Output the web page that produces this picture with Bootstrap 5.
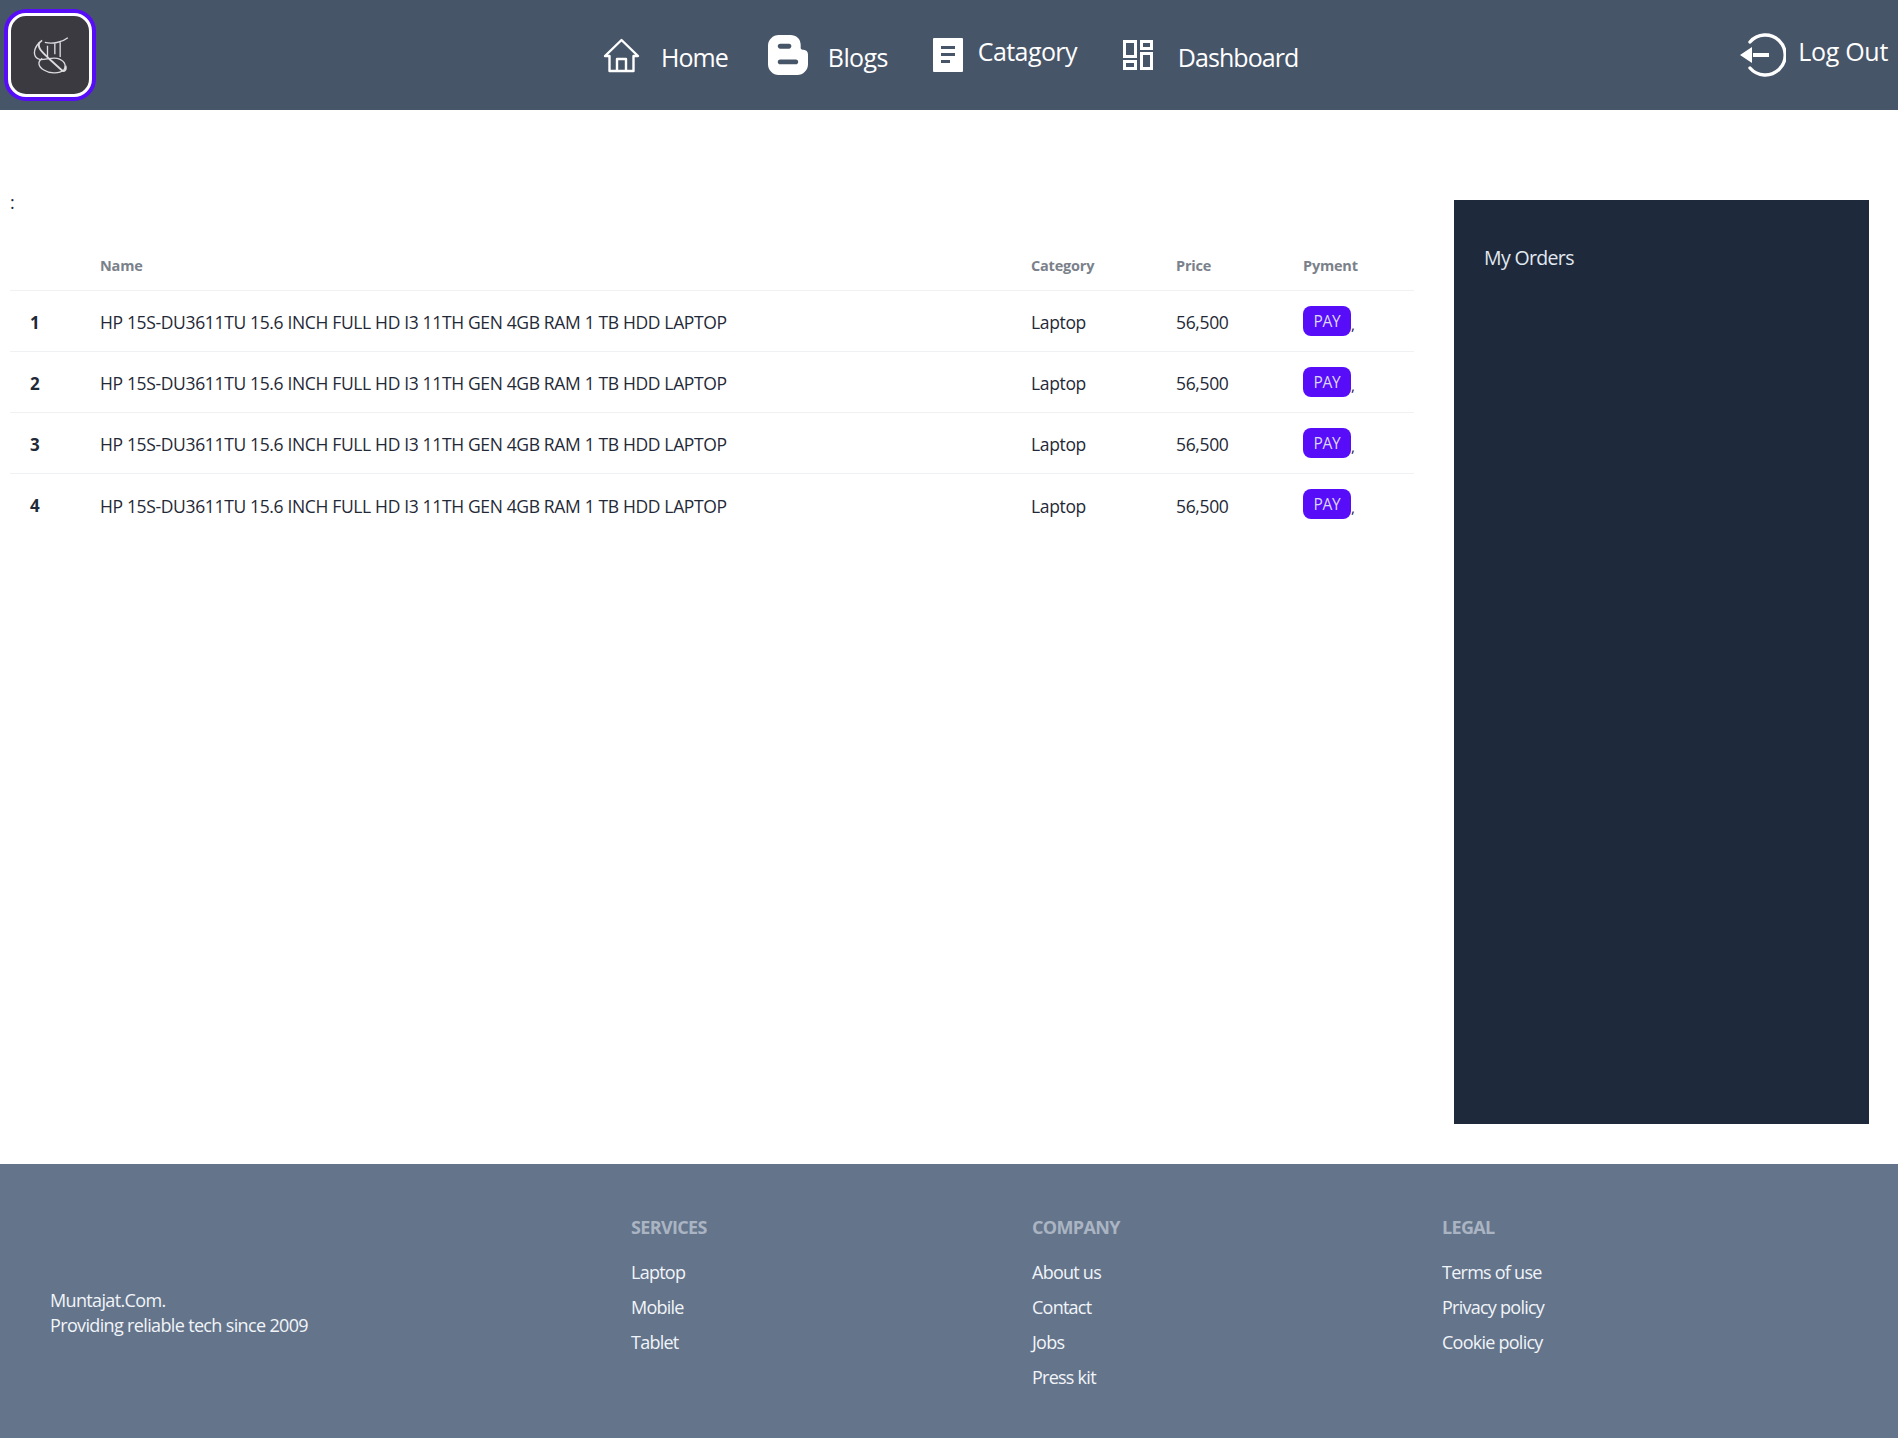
<!doctype html>
<html lang="en">
<head>
<meta charset="utf-8">
<title>Muntajat</title>
<link href="https://cdn.jsdelivr.net/npm/bootstrap@5.3.0/dist/css/bootstrap.min.css" rel="stylesheet">
<style>
body{font-family:"Open Sans","Noto Sans",sans-serif;color:#1f2937;background:#fff;font-size:16px;letter-spacing:-.45px}
.topbar{height:110px;background:#475569;position:relative;padding:0 10px 0 8px}
.logo-box{width:84px;height:84px;margin-top:13px;border-radius:18px;background:#3a3a40;border:3px solid #fff;box-shadow:0 0 0 4px #570df8}
.topnav{position:absolute;left:603px;top:0;height:110px}
.topnav a,.logout{color:#fff;text-decoration:none;font-size:25px;letter-spacing:-.6px}
.txt-low{padding-top:6px}
.txt-high{padding-bottom:6px}
.nav-home{gap:21px;letter-spacing:-.95px!important}
.nav-blogs{gap:20px;margin-left:40px}
.nav-cat{gap:15px;margin-left:45px}
.nav-dash{gap:25px;margin-left:46px;letter-spacing:-.95px!important}
.logout{gap:12px;letter-spacing:-.3px}
.page-area{padding:82px 29px 40px 10px;gap:40px}
.left-col{width:1404px;flex:none}
.colon-line{height:51px;line-height:20px;font-size:18px}
.orders{table-layout:fixed;width:1404px;margin:0;font-size:17.5px;letter-spacing:-.35px;--bs-table-border-color:#f0f1f2;border-color:#f0f1f2}
.orders th,.orders td{padding:0;vertical-align:middle;height:61px;color:#1f2937}
.orders td.txt-cell{padding-top:4px}
.orders thead th{height:47px;font-size:14.5px;font-weight:700;color:#7b818b;letter-spacing:-.2px;padding-bottom:1px}
.orders tbody tr:last-child td{border-bottom:0}
.c0{width:90px}.c1{width:931px}.c2{width:145px}.c3{width:127px}
.orders td.idx{padding-left:20px;font-weight:700;font-size:17px}
.pay-btn{background:#570df8;color:#ddd6fb;font-size:15.5px;line-height:30px;height:30px;width:48px;padding:0;border:0;border-radius:8px;letter-spacing:-.3px}
.pay-wrap{display:inline-flex;align-items:flex-end}
.sidepanel{width:415px;height:924px;margin-top:8px;background:#1e293b;color:#e2e8f0;padding:43px 30px;font-size:19.5px;flex:none;letter-spacing:-.65px}
.foot{height:274px;background:#64748b;color:#f1f5f9;display:grid;grid-template-columns:631px 401px 410px 1fr;font-size:18px;letter-spacing:-.75px}
.foot-brand{padding-left:50px;line-height:25px;padding-top:124px;letter-spacing:-.65px}
.foot-col{padding-top:51px}
.foot-head{font-weight:700;color:#aab4c2;font-size:18px;line-height:24px;margin-bottom:21px;letter-spacing:-.65px}
.foot-link{display:block;color:#f1f5f9;text-decoration:none;line-height:25px;margin-bottom:10px}
</style>
</head>
<body>
<header class="topbar d-flex">
  <div class="logo-box d-flex align-items-center justify-content-center">
    <svg width="37" height="40" viewBox="90 100 110 120" fill="none" stroke="#dcdcdf" stroke-width="4" aria-label="logo">
      <path d="M112 122C103 140 125 155 145 175L178 205C186 212 194 205 190 192" stroke-width="5.500"/>
      <path d="M120 116C100 130 92 150 100 165 112 185 140 165 165 170 185 175 195 190 185 205 170 218 140 215 125 205 108 195 105 180 120 170"/>
      <path d="M136 132V168M128 122C150 128 180 122 197 108M158 126V158M174 122V166"/>
    </svg>
  </div>
  <nav class="topnav d-flex align-items-center">
    <a href="#" class="d-flex align-items-center nav-home">
      <svg width="37" height="35" viewBox="0 0 37 35" fill="none" stroke="#fff" stroke-width="2.4" stroke-linejoin="round" aria-hidden="true">
        <path d="M2 18 18.500 2 35 18h-4.500v15H6.500V18z"/><path d="M14 33V21h9v12"/>
      </svg>
      <span class="txt-low">Home</span>
    </a>
    <a href="#" class="d-flex align-items-center nav-blogs">
      <svg width="40" height="40" viewBox="0 0 41 41" aria-hidden="true">
        <path fill="#fff" fill-rule="evenodd" d="M11 0h12c6 0 10.500 4 10.500 10v3c0 1.500 1 2 3 2.200 2.500.3 4.500 1.800 4.500 4.800v10c0 6-5 11-11 11H11C5 41 0 36 0 30V11C0 5 5 0 11 0zm1.500 9c-3.300 0-3.300 5 0 5h9c3.300 0 3.300-5 0-5zm0 16c-3.300 0-3.300 5 0 5h16c3.300 0 3.300-5 0-5z"/>
      </svg>
      <span class="txt-low">Blogs</span>
    </a>
    <a href="#" class="d-flex align-items-center nav-cat">
      <svg width="30" height="34" viewBox="0 0 30 34" aria-hidden="true">
        <path fill="#fff" fill-rule="evenodd" d="M1 0h28a1 1 0 0 1 1 1v32a1 1 0 0 1-1 1H1a1 1 0 0 1-1-1V1a1 1 0 0 1 1-1zm7 8v3h14V8zm0 7v3h14v-3zm0 7v3h9v-3z"/>
      </svg>
      <span class="txt-high">Catagory</span>
    </a>
    <a href="#" class="d-flex align-items-center nav-dash">
      <svg width="30" height="30" viewBox="0 0 30 30" fill="none" stroke="#fff" stroke-width="3" aria-hidden="true">
        <rect x="1.500" y="1.500" width="11" height="15"/><rect x="18.500" y="1.500" width="10" height="7"/><rect x="1.500" y="21.500" width="11" height="7"/><rect x="18.500" y="13.500" width="10" height="15"/>
      </svg>
      <span class="txt-low">Dashboard</span>
    </a>
  </nav>
  <a href="#" class="logout d-flex align-items-center ms-auto">
    <svg width="46" height="44" viewBox="0 0 46 44" fill="none" stroke="#fff" stroke-width="3.4" aria-hidden="true">
      <path d="M10 9a20 20 0 1 1 0 26" stroke-linecap="round"/>
      <path d="M13 22h16" stroke-width="4"/>
      <path d="M0 22 12 14v16z" fill="#fff" stroke="none"/>
    </svg>
    <span class="txt-high">Log Out</span>
  </a>
</header>

<main class="page-area d-flex">
  <section class="left-col">
    <div class="colon-line">:</div>
    <table class="table orders">
      <colgroup><col class="c0"><col class="c1"><col class="c2"><col class="c3"><col></colgroup>
      <thead>
        <tr><th></th><th>Name</th><th>Category</th><th>Price</th><th>Pyment</th></tr>
      </thead>
      <tbody>
        <tr><td class="idx txt-cell">1</td><td class="txt-cell">HP 15S-DU3611TU 15.6 INCH FULL HD I3 11TH GEN 4GB RAM 1 TB HDD LAPTOP</td><td class="txt-cell">Laptop</td><td class="txt-cell">56,500</td><td><span class="pay-wrap"><button class="btn pay-btn">PAY</button><small>,</small></span></td></tr>
        <tr><td class="idx txt-cell">2</td><td class="txt-cell">HP 15S-DU3611TU 15.6 INCH FULL HD I3 11TH GEN 4GB RAM 1 TB HDD LAPTOP</td><td class="txt-cell">Laptop</td><td class="txt-cell">56,500</td><td><span class="pay-wrap"><button class="btn pay-btn">PAY</button><small>,</small></span></td></tr>
        <tr><td class="idx txt-cell">3</td><td class="txt-cell">HP 15S-DU3611TU 15.6 INCH FULL HD I3 11TH GEN 4GB RAM 1 TB HDD LAPTOP</td><td class="txt-cell">Laptop</td><td class="txt-cell">56,500</td><td><span class="pay-wrap"><button class="btn pay-btn">PAY</button><small>,</small></span></td></tr>
        <tr><td class="idx txt-cell">4</td><td class="txt-cell">HP 15S-DU3611TU 15.6 INCH FULL HD I3 11TH GEN 4GB RAM 1 TB HDD LAPTOP</td><td class="txt-cell">Laptop</td><td class="txt-cell">56,500</td><td><span class="pay-wrap"><button class="btn pay-btn">PAY</button><small>,</small></span></td></tr>
      </tbody>
    </table>
  </section>
  <aside class="sidepanel">My Orders</aside>
</main>

<footer class="foot">
  <div class="foot-brand">Muntajat.Com.<br>Providing reliable tech since 2009</div>
  <div class="foot-col"><div class="foot-head">SERVICES</div><a class="foot-link" href="#">Laptop</a><a class="foot-link" href="#">Mobile</a><a class="foot-link" href="#">Tablet</a></div>
  <div class="foot-col"><div class="foot-head">COMPANY</div><a class="foot-link" href="#">About us</a><a class="foot-link" href="#">Contact</a><a class="foot-link" href="#">Jobs</a><a class="foot-link" href="#">Press kit</a></div>
  <div class="foot-col"><div class="foot-head">LEGAL</div><a class="foot-link" href="#">Terms of use</a><a class="foot-link" href="#">Privacy policy</a><a class="foot-link" href="#">Cookie policy</a></div>
</footer>
<script src="https://cdn.jsdelivr.net/npm/bootstrap@5.3.0/dist/js/bootstrap.bundle.min.js"></script>
</body>
</html>
